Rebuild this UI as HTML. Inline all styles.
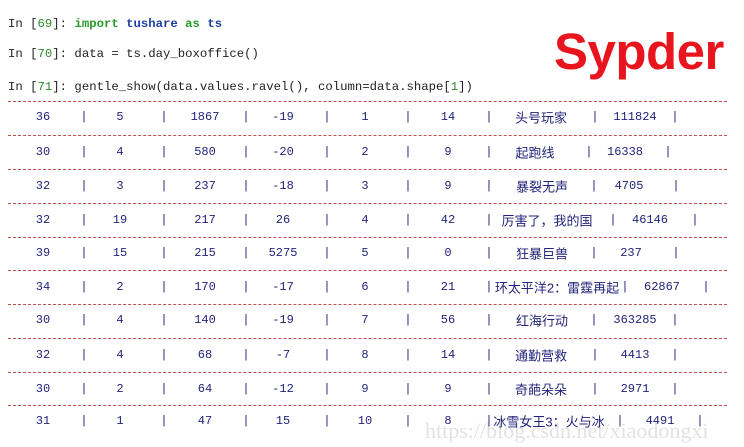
<!DOCTYPE html>
<html><head><meta charset="utf-8"><style>
body{margin:0;width:744px;height:447px;background:#fff;position:relative;overflow:hidden;font-family:"Liberation Mono","Noto Sans CJK SC",monospace;}
.h{position:absolute;left:8px;font-size:12.3px;color:#222;white-space:pre;}
.g{color:#2a9a2a;font-weight:bold}.b{color:#1f3fa0;font-weight:bold}.n{color:#2a8a2a}
.l{position:absolute;left:8px;width:719px;border-top:1px dashed #c05050;height:0}
.c{position:absolute;transform:translate(-50%,-50%);font-size:12px;color:#23237a;white-space:nowrap}
.z{font-family:"Liberation Sans","Noto Sans CJK SC",sans-serif;font-size:13px}
</style></head><body>
<div class="h" style="top:17px">In [<span class="n">69</span>]: <span class="g">import</span> <span class="b">tushare</span> <span class="g">as</span> <span class="b">ts</span></div>
<div class="h" style="top:47px">In [<span class="n">70</span>]: data = ts.day_boxoffice()</div>
<div class="h" style="top:80px">In [<span class="n">71</span>]: gentle_show(data.values.ravel(), column=data.shape[<span class="n">1</span>])</div>
<div style="position:absolute;left:554px;top:22px;font:bold 51px 'Liberation Sans',sans-serif;color:#e8141e;letter-spacing:-0.5px">Sypder</div>
<div style="position:absolute;left:425px;top:418px;font:22px 'Liberation Serif',serif;color:#e2e2e2;white-space:nowrap">https://blog.csdn.net/xiaodongxi</div>
<div id="t"></div>
<script>
var rows=[
["36","5","1867","-19","1","14","头号玩家",0,541,595,"111824",635,675],
["30","4","580","-20","2","9","起跑线",0,535,589,"16338",625,668],
["32","3","237","-18","3","9","暴裂无声",0,542,594,"4705",629,676],
["32","19","217","26","4","42","厉害了，我的国",1,547,613,"46146",650,695],
["39","15","215","5275","5","0","狂暴巨兽",0,542,594,"237",631,676],
["34","2","170","-17","6","21","环太平洋2：雷霆再起",1,557,625,"62867",662,706],
["30","4","140","-19","7","56","红海行动",0,542,594,"363285",635,675],
["32","4","68","-7","8","14","通勤营救",0,541,595,"4413",635,675],
["30","2","64","-12","9","9","奇葩朵朵",0,541,595,"2971",635,675],
["31","1","47","15","10","8","冰雪女王3：火与冰",1,549,620,"4491",660,700]];
var ys=[117,152,186,220,253,287,320,355,389,421],lines=[101,135,169,203,237,270,304,338,372,405];
var cx=[43,120,205,283,365,448],px=[84,164,246,327,408,489],h='';
lines.forEach(function(y){h+='<div class="l" style="top:'+y+'px"></div>';});
rows.forEach(function(r,i){var y=ys[i];
function s(x,t,c){h+='<div class="c'+(c?' z':'')+'" style="left:'+x+'px;top:'+y+'px">'+t+'</div>';}
for(var k=0;k<6;k++){s(cx[k],r[k]);s(px[k],'|');}
s(r[8],r[6],1);s(r[9],'|');s(r[11],r[10]);s(r[12],'|');});
document.getElementById('t').innerHTML=h;
</script>
</body></html>
